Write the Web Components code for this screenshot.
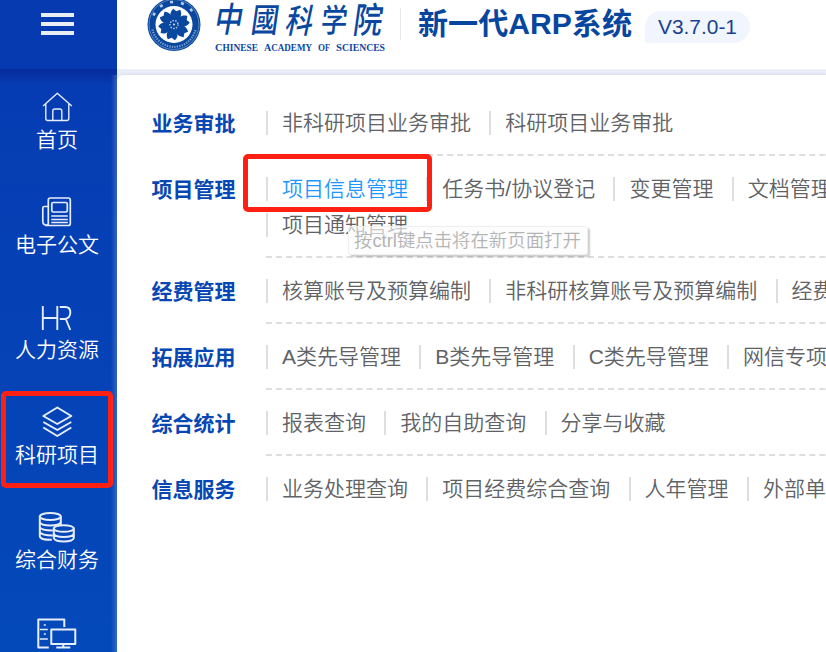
<!DOCTYPE html>
<html lang="zh-CN">
<head>
<meta charset="utf-8">
<title>新一代ARP系统</title>
<style>
html,body{margin:0;height:100%;overflow:hidden}
body{font-family:"Liberation Sans","Noto Sans CJK SC",sans-serif;font-size:21px;background:#fff}
</style>
</head>
<body>
<arp-app></arp-app>
<script>
class Base extends HTMLElement{
  constructor(){super();this.attachShadow({mode:'open'})}
  connectedCallback(){this.shadowRoot.innerHTML=this.render()}
}
const ICONS={
home:'<path stroke-width="1.400" d="M3.300 14 17.500 1.200 32 14M6 12v14.500q0 2 2 2h19q2 0 2-2V12M13 28.500V19q0-2 2-2h5q2 0 2 2v9.500"/>',
news:'<path d="M8.500 28.500q-5.500 0-5.500-4V11q0-1.500 1.500-1.500h4M8.500 26.500V3q0-2 2-2h18q2 0 2 2v23.500q0 2-2 2H6q2.500 0 2.500-2"/><rect x="12" y="5.500" width="15.500" height="9.500" rx="1.500"/><path d="M11.500 19h16.500M11.500 22.500h16.500M11.500 25.500h16.500"/>',
hr:'<path d="M3 4v24M17.500 4v24M3 16h14.500M20 5h5.500q5 0 5 5.500T25 17h-5M26 17l4.500 11" stroke-width="1.900"/>',
layers:'<path d="M17.500 .500 31.500 9 17.500 17 3.500 9ZM3.500 15 17.500 23 31.500 15M3.500 20.500 17.500 29 31.500 20.500" stroke-width="2"/>',
coins:'<g stroke-width="2"><ellipse cx="10.500" cy="4.500" rx="10.500" ry="3.500"/><path d="M0 4.500V24q0 4 12 3.700M21 4.500V13M0 10q1 3.500 10.500 3.500T21 10M0 15q1 3.500 13 3.500M0 20q2 3.500 13 3.500"/><ellipse cx="24" cy="16.500" rx="10" ry="3.300"/><path d="M14 16.500V26q1 3.500 10 3.500T34 26V16.500M14 21.500q1 3.500 10 3.500t10-3.500"/></g>',
server:'<path d="M9 30.500H-1.500V2.500H24.500V10" stroke-width="2"/><path d="M4 8h2M4 17h2M0 12.500h8M0 22h8"/><rect x="11.500" y="12.500" width="24" height="14.500" stroke-width="2"/><path d="M23.500 27v3.500M16.500 30.500h14" stroke-width="2"/>'
};
customElements.define('arp-icon',class extends Base{render(){return `<style>:host{display:block;width:36px;height:32px}svg{display:block;overflow:visible;fill:none;stroke:#e6edfb;stroke-width:1.700;stroke-linejoin:round}</style><svg width="36" height="32"><g transform="translate(.8 0)">${ICONS[this.getAttribute('name')]}</g></svg>`}});
customElements.define('nav-item',class extends Base{render(){return `<style>
:host{display:flex;flex-direction:column;align-items:center;height:105px;color:#fff;position:relative;line-height:30px;white-space:nowrap;font-weight:350}
span{margin-top:.6px}
:host([marked])::after{content:"";position:absolute;left:1px;top:-16px;width:102px;height:87px;border:5px solid #ff2014;border-radius:5px}
</style><arp-icon name="${this.getAttribute('icon')}"></arp-icon><span><slot></slot></span>`}});
customElements.define('arp-sidebar',class extends Base{render(){return `<style>
:host{display:flex;flex-direction:column;width:117px;flex:none;background:linear-gradient(#063ab2,#0449ba);overflow:hidden;position:relative}
:host::after{content:"";position:absolute;right:0;top:75px;bottom:0;width:6px;background:linear-gradient(90deg,transparent,#ffffff30)}
.top{height:69px;flex:none;box-sizing:border-box;padding:13px 0 0 41px;background:#063ab1}
.top i{display:block;width:33px;height:4px;background:#e9eef5;margin-bottom:5px}
nav{padding-top:23px;height:560px;background:linear-gradient(#062b9c,transparent 16px);padding-right:3px}
</style><div class="top"><i></i><i></i><i></i></div><nav>
<nav-item icon="home">首页</nav-item><nav-item icon="news">电子公文</nav-item><nav-item icon="hr">人力资源</nav-item><nav-item icon="layers" marked>科研项目</nav-item><nav-item icon="coins">综合财务</nav-item><nav-item icon="server"></nav-item></nav>`}});
customElements.define('cas-logo',class extends Base{render(){
const petals=[0,60,120,180,240,300].map(a=>`<path transform="rotate(${a+10})" d="M-3-3.500C-5-7-7-11-3.500-15.500L0-13.500 3.500-15.500C7-11 5-7 3-3.500Z"/>`).join('');
const glyphs=[['中',66,32,-10,32],['國',103,31,-8,32],['科',137,31,-12,33],['学',173,30,-6,32],['院',205,33,-8,33]].map(([c,x,s,k,y])=>`<text transform="translate(${x} ${y}) skewX(${k}) scale(.88 1.080)" font-size="${s}">${c}</text>`).join('');
const words=[['CHINESE',68,43],['ACADEMY',117,48],['OF',171,12],['SCIENCES',189,49]].map(([w,x,l])=>`<text x="${x}" y="51" font-size="9.500" textLength="${l}" lengthAdjust="spacingAndGlyphs"><tspan font-size="10.500">${w[0]}</tspan>${w.slice(1)}</text>`).join('');
return `<style>:host{display:block;width:254px;height:69px;flex:none}svg{display:block}</style>
<svg width="254" height="69" fill="#0a489f"><g transform="translate(27 24.500)"><circle r="26.500"/><circle r="18.500" fill="#fff"/><circle r="25" fill="none" stroke="#7c9fce" stroke-width=".7"/><path d="M-20.500-9A22.300 22.300 0 0 1 20.500-9" fill="none" stroke="#b9cce7" stroke-width="2.600" stroke-dasharray="3 8"/><path d="M-21.500 5A22 22 0 0 0 21.500 5" fill="none" stroke="#7da0cf" stroke-width="2.200" stroke-dasharray="1.300 1.200"/><circle r="7"/>${petals}<circle r="4" fill="none" stroke="#c5d5eb" stroke-width="1.400" stroke-dasharray="1.400 1.400"/><circle r="1" fill="#dce7f5"/></g>
<g font-family="Noto Sans CJK SC" font-weight="500">${glyphs}</g>
<g font-family="Liberation Serif" font-weight="700">${words}</g>
<path d="M253 8h1v32h-1z" fill="#e5e8ec"/></svg>`}});
customElements.define('arp-header',class extends Base{render(){return `<style>
:host{display:flex;height:69px;padding-left:30px;border-bottom:6px solid #eaeef7;background:#fff;color:#07469f;white-space:nowrap}
h1{font-size:30.100px;line-height:40px;margin:4px 0 0 17px;font-weight:700}
b{font-weight:400;font-size:20.900px;line-height:32px;height:32px;margin:11px 0 0 13px;padding:0 13px;border-radius:16px 16px 16px 0;background:#f1f5fe;color:#174391}
</style><cas-logo></cas-logo><h1>新一代ARP系统</h1><b>V3.7.0-1</b>`}});
customElements.define('menu-link',class extends Base{render(){return `<style>
:host{display:block;border-left:2px solid #dedede;padding:0 18.300px 0 14px;height:24px;line-height:24px;margin-bottom:12px;color:#606266;font-weight:350;white-space:nowrap;position:relative}
:host([active]){color:#1e96ff}
:host([active])::after{content:"";position:absolute;left:-25px;top:-23px;width:179px;height:48px;border:5px solid #ff2014;border-radius:5px;z-index:2}
</style><slot></slot>`}});
customElements.define('menu-row',class extends Base{render(){return `<style>
:host{display:flex;width:764.500px}
b{width:114.500px;flex:none;padding-top:22px;line-height:24px;color:#0747b4}
div{flex:1;padding:21px 0 7px;border-bottom:2px dashed #dedede;display:flex;flex-wrap:wrap}
:host([last]) div{border:0}
</style><b>${this.getAttribute('label')}</b><div><slot></slot></div>`}});
customElements.define('arp-tip',class extends Base{render(){return `<style>
:host{position:absolute;left:348px;top:226px;width:238px;height:27px;border:1px solid #efefef;border-radius:3px;background:#fcfcfca8;box-shadow:2px 2px 2px #0003;color:#b4b4b4;font-weight:350;font-size:18.400px;line-height:27px;white-space:nowrap;box-sizing:content-box;text-indent:5px;z-index:3}
</style><slot></slot>`}});
const ROWS=[['业务审批','非科研项目业务审批','科研项目业务审批'],['项目管理','*项目信息管理','任务书/协议登记','变更管理','文档管理','项目通知管理'],['经费管理','核算账号及预算编制','非科研核算账号及预算编制','经费'],['拓展应用','A类先导管理','B类先导管理','C类先导管理','网信专项'],['综合统计','报表查询','我的自助查询','分享与收藏'],['信息服务','业务处理查询','项目经费综合查询','人年管理','外部单']];
customElements.define('arp-menu',class extends Base{render(){return `<style>:host{display:block;padding:15px 0 0 34.500px}</style>`+ROWS.map(([l,...a],i)=>`<menu-row label="${l}"${i==5?' last':''}>${a.map(t=>t[0]=='*'?`<menu-link active>${t.slice(1)}</menu-link>`:`<menu-link>${t}</menu-link>`).join('')}</menu-row>`).join('')}});
customElements.define('arp-app',class extends Base{render(){return `<style>
:host{display:flex;width:826px;height:652px;overflow:hidden;position:relative}
main{flex:1;min-width:0;background:#eaeef7}
arp-menu{background:#fff;border-radius:6px 0 0 0;height:600px;box-shadow:0 -1px 2px #c9d0e280}
</style><arp-sidebar></arp-sidebar><main><arp-header></arp-header><arp-menu></arp-menu></main><arp-tip>按ctrl键点击将在新页面打开</arp-tip>`}});
</script>
</body>
</html>
